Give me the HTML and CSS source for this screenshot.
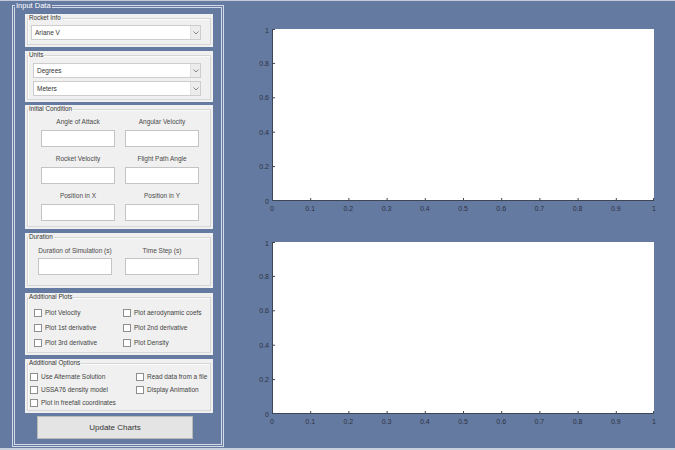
FILE: index.html
```html
<!DOCTYPE html>
<html lang="en">
<head>
    <meta charset="UTF-8">
    <title>Rocket Simulation</title>
    <link rel="stylesheet" href="styles.css">
</head>
<body>
    <div class="app">
        <fieldset class="input-data">
            <legend>Input Data</legend>
            <div class="stack">

                <div class="panel rocket">
                    <fieldset class="group">
                        <legend>Rocket Info</legend>
                        <div class="popup wide"><span>Ariane V</span><i class="arrow"><svg width="6" height="4" viewBox="0 0 6 4"><polyline points="0.5,0.5 3,3 5.5,0.5" fill="none" stroke="#888" stroke-width="1"/></svg></i></div>
                    </fieldset>
                </div>

                <div class="panel units">
                    <fieldset class="group">
                        <legend>Units</legend>
                        <div class="popup"><span>Degrees</span><i class="arrow"><svg width="6" height="4" viewBox="0 0 6 4"><polyline points="0.5,0.5 3,3 5.5,0.5" fill="none" stroke="#888" stroke-width="1"/></svg></i></div>
                        <div class="popup"><span>Meters</span><i class="arrow"><svg width="6" height="4" viewBox="0 0 6 4"><polyline points="0.5,0.5 3,3 5.5,0.5" fill="none" stroke="#888" stroke-width="1"/></svg></i></div>
                    </fieldset>
                </div>

                <div class="panel initial">
                    <fieldset class="group">
                        <legend>Initial Condition</legend>
                        <div class="fields">
                            <div class="field"><label>Angle of Attack</label><input type="text"></div>
                            <div class="field"><label>Angular Velocity</label><input type="text"></div>
                            <div class="field"><label>Rocket Velocity</label><input type="text"></div>
                            <div class="field"><label>Flight Path Angle</label><input type="text"></div>
                            <div class="field"><label>Position in X</label><input type="text"></div>
                            <div class="field"><label>Position in Y</label><input type="text"></div>
                        </div>
                    </fieldset>
                </div>

                <div class="panel duration">
                    <fieldset class="group">
                        <legend>Duration</legend>
                        <div class="fields">
                            <div class="field"><label>Duration of Simulation (s)</label><input type="text"></div>
                            <div class="field"><label>Time Step (s)</label><input type="text"></div>
                        </div>
                    </fieldset>
                </div>

                <div class="panel plots-opts">
                    <fieldset class="group">
                        <legend>Additional Plots</legend>
                        <div class="checks">
                            <label class="check"><span class="box"></span>Plot Velocity</label>
                            <label class="check"><span class="box"></span>Plot aerodynamic coefs</label>
                            <label class="check"><span class="box"></span>Plot 1st derivative</label>
                            <label class="check"><span class="box"></span>Plot 2nd derivative</label>
                            <label class="check"><span class="box"></span>Plot 3rd derivative</label>
                            <label class="check"><span class="box"></span>Plot Density</label>
                        </div>
                    </fieldset>
                </div>

                <div class="panel options">
                    <fieldset class="group">
                        <legend>Additional Options</legend>
                        <div class="checks">
                            <label class="check"><span class="box"></span>Use Alternate Solution</label>
                            <label class="check"><span class="box"></span>Read data from a file</label>
                            <label class="check"><span class="box"></span>USSA76 density model</label>
                            <label class="check"><span class="box"></span>Display Animation</label>
                            <label class="check"><span class="box"></span>Plot in freefall coordinates</label>
                        </div>
                    </fieldset>
                </div>

                <button class="update">Update Charts</button>
            </div>
        </fieldset>

        <div class="charts">
            <svg class="chart first" width="451" height="224">
                <g transform="translate(48,28)">
                    <rect x="0" y="0" width="382" height="172" fill="#fff"/>
                    <g stroke="#3f4656" stroke-width="1">
                        <line x1="0.5" y1="0" x2="0.5" y2="172"/>
                        <line x1="0" y1="171.5" x2="382" y2="171.5"/>
                        <line x1="38.7" y1="172" x2="38.7" y2="169"/>
                        <line x1="76.9" y1="172" x2="76.9" y2="169"/>
                        <line x1="115.1" y1="172" x2="115.1" y2="169"/>
                        <line x1="153.3" y1="172" x2="153.3" y2="169"/>
                        <line x1="191.5" y1="172" x2="191.5" y2="169"/>
                        <line x1="229.7" y1="172" x2="229.7" y2="169"/>
                        <line x1="267.9" y1="172" x2="267.9" y2="169"/>
                        <line x1="306.1" y1="172" x2="306.1" y2="169"/>
                        <line x1="344.3" y1="172" x2="344.3" y2="169"/>
                        <line x1="381.5" y1="172" x2="381.5" y2="169"/>
                        <line x1="0" y1="137.6" x2="3" y2="137.6"/>
                        <line x1="0" y1="103.2" x2="3" y2="103.2"/>
                        <line x1="0" y1="68.8" x2="3" y2="68.8"/>
                        <line x1="0" y1="34.4" x2="3" y2="34.4"/>
                        <line x1="0" y1="0.5" x2="3" y2="0.5"/>
                    </g>
                    <g class="ticks-x">
                        <text x="0" y="182">0</text>
                        <text x="38.2" y="182">0.1</text>
                        <text x="76.4" y="182">0.2</text>
                        <text x="114.6" y="182">0.3</text>
                        <text x="152.8" y="182">0.4</text>
                        <text x="191" y="182">0.5</text>
                        <text x="229.2" y="182">0.6</text>
                        <text x="267.4" y="182">0.7</text>
                        <text x="305.6" y="182">0.8</text>
                        <text x="343.8" y="182">0.9</text>
                        <text x="382" y="182">1</text>
                    </g>
                    <g class="ticks-y">
                        <text x="-3" y="174.5">0</text>
                        <text x="-3" y="140.1">0.2</text>
                        <text x="-3" y="105.7">0.4</text>
                        <text x="-3" y="71.3">0.6</text>
                        <text x="-3" y="36.9">0.8</text>
                        <text x="-3" y="3.5">1</text>
                    </g>
                </g>
            </svg>
            <svg class="chart second" width="451" height="223">
                <g transform="translate(48,17)">
                    <rect x="0" y="0" width="382" height="172" fill="#fff"/>
                    <g stroke="#3f4656" stroke-width="1">
                        <line x1="0.5" y1="0" x2="0.5" y2="172"/>
                        <line x1="0" y1="171.5" x2="382" y2="171.5"/>
                        <line x1="38.7" y1="172" x2="38.7" y2="169"/>
                        <line x1="76.9" y1="172" x2="76.9" y2="169"/>
                        <line x1="115.1" y1="172" x2="115.1" y2="169"/>
                        <line x1="153.3" y1="172" x2="153.3" y2="169"/>
                        <line x1="191.5" y1="172" x2="191.5" y2="169"/>
                        <line x1="229.7" y1="172" x2="229.7" y2="169"/>
                        <line x1="267.9" y1="172" x2="267.9" y2="169"/>
                        <line x1="306.1" y1="172" x2="306.1" y2="169"/>
                        <line x1="344.3" y1="172" x2="344.3" y2="169"/>
                        <line x1="381.5" y1="172" x2="381.5" y2="169"/>
                        <line x1="0" y1="137.6" x2="3" y2="137.6"/>
                        <line x1="0" y1="103.2" x2="3" y2="103.2"/>
                        <line x1="0" y1="68.8" x2="3" y2="68.8"/>
                        <line x1="0" y1="34.4" x2="3" y2="34.4"/>
                        <line x1="0" y1="0.5" x2="3" y2="0.5"/>
                    </g>
                    <g class="ticks-x">
                        <text x="0" y="182">0</text>
                        <text x="38.2" y="182">0.1</text>
                        <text x="76.4" y="182">0.2</text>
                        <text x="114.6" y="182">0.3</text>
                        <text x="152.8" y="182">0.4</text>
                        <text x="191" y="182">0.5</text>
                        <text x="229.2" y="182">0.6</text>
                        <text x="267.4" y="182">0.7</text>
                        <text x="305.6" y="182">0.8</text>
                        <text x="343.8" y="182">0.9</text>
                        <text x="382" y="182">1</text>
                    </g>
                    <g class="ticks-y">
                        <text x="-3" y="174.5">0</text>
                        <text x="-3" y="140.1">0.2</text>
                        <text x="-3" y="105.7">0.4</text>
                        <text x="-3" y="71.3">0.6</text>
                        <text x="-3" y="36.9">0.8</text>
                        <text x="-3" y="3.5">1</text>
                    </g>
                </g>
            </svg>
        </div>
    </div>
</body>
</html>
```

FILE: styles.css
```css
body {
    margin: 0;
    background: #657aa1;
    font-family: "Liberation Sans", Arial, sans-serif;
    color: #2b2b2b;
}

.app {
    display: flex;
    width: 675px;
    height: 450px;
    box-sizing: border-box;
    border-top: 1px solid #c3cbdb;
    border-bottom: 2px solid #c8cfdd;
    overflow: hidden;
}

/* outer "Input Data" frame */
.input-data {
    margin: 0 0 0 12px;
    padding: 0;
    width: 212px;
    box-sizing: border-box;
    border: 3px double #d3daea;
    align-self: flex-start;
}

.input-data > legend {
    color: #ffffff;
    font-size: 7.5px;
    line-height: 10px;
    padding: 0 1px;
    margin-left: 0;
}

.stack {
    display: flex;
    flex-direction: column;
    padding: 3px 8px 5px 10px;
}

/* grey sub panels */
.panel {
    background: #f0f0f0;
    padding: 0 2px 2px;
    box-sizing: border-box;
}

.group {
    margin: 0;
    padding: 0;
    height: 100%;
    box-sizing: border-box;
    border: 1px solid #d6d6d6;
    box-shadow: inset 1px 1px 0 #fbfbfb;
}

.group > legend {
    font-size: 6.3px;
    line-height: 8px;
    padding: 0 1px;
    color: #333;
}

.rocket { height: 33px; }
.units { height: 51px; margin-top: 4px; }
.initial { height: 124px; margin-top: 3px; }
.duration { height: 55px; margin-top: 4px; }
.plots-opts { height: 62px; margin-top: 5px; }
.options { height: 54px; margin-top: 4px; }

/* popup menus */
.popup {
    display: flex;
    height: 15px;
    box-sizing: border-box;
    border: 1px solid #cdcdcd;
    background: #fff;
    font-size: 6.5px;
    color: #333;
    align-items: center;
}

.popup span {
    flex: 1;
    padding-left: 3px;
}

.popup .arrow {
    display: flex;
    align-items: center;
    justify-content: center;
    width: 9px;
    height: 100%;
    background: #ececec;
    border-left: 1px solid #e0e0e0;
}

.popup.wide {
    width: 170px;
    margin: 3px 0 0 3px;
}

.units .popup {
    width: 168px;
    margin: 4px 0 0 5px;
}

.units .popup + .popup {
    margin-top: 3px;
}

/* edit boxes */
.fields {
    display: grid;
    grid-template-columns: 74px 74px;
    column-gap: 10px;
    row-gap: 7px;
    margin: 4px 0 0 13px;
}

.duration .fields {
    column-gap: 13px;
    margin: 5px 0 0 10px;
}

.field {
    display: flex;
    flex-direction: column;
    align-items: center;
}

.field label {
    font-size: 6.5px;
    line-height: 9px;
    margin-bottom: 4px;
    white-space: nowrap;
    color: #4a4a4a;
}

.duration .field label {
    margin-bottom: 3px;
}

.field input {
    width: 74px;
    height: 17px;
    box-sizing: border-box;
    border: 1px solid #c4c4c4;
    background: #fff;
    margin: 0;
    padding: 0;
}

/* check boxes */
.checks {
    display: grid;
    grid-template-columns: 89px auto;
    grid-auto-rows: 15px;
    margin: 4px 0 0 6px;
}

.options .checks {
    grid-template-columns: 106px auto;
    grid-auto-rows: 13px;
    margin: 3px 0 0 2px;
}

.check {
    display: flex;
    align-items: center;
    font-size: 6.5px;
    color: #444;
    white-space: nowrap;
}

.check .box {
    width: 8px;
    height: 8px;
    box-sizing: border-box;
    border: 1px solid #8e8e8e;
    background: #fff;
    margin-right: 3px;
}

.update {
    width: 156px;
    height: 23px;
    margin: 3px 0 0 12px;
    padding: 0;
    background: #e4e4e4;
    border: 1px solid #b9b9b9;
    font-family: "Liberation Sans", Arial, sans-serif;
    font-size: 8px;
    color: #333;
}

/* axes */
.charts {
    display: flex;
    flex-direction: column;
}

.chart {
    display: block;
}

.chart text {
    font-family: "Liberation Sans", Arial, sans-serif;
    font-size: 7px;
    fill: #2c3242;
}

.ticks-x text {
    text-anchor: middle;
}

.ticks-y text {
    text-anchor: end;
}
```
